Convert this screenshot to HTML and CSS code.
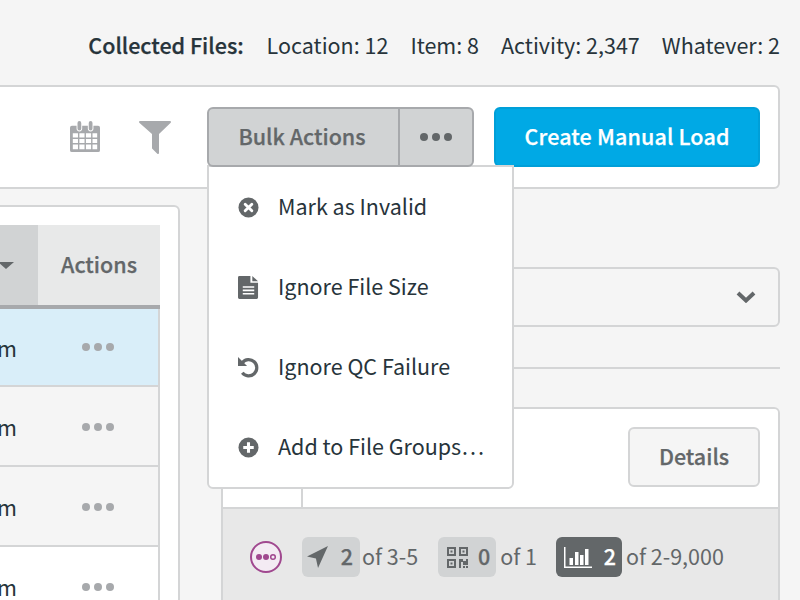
FILE: index.html
```html
<!doctype html>
<html lang="en">
<head>
    <meta charset="utf-8">
    <title>Collected Files</title>
    <link rel="stylesheet" href="styles.css">
</head>
<body>
<div class="page">
    <div class="stats">
        <strong class="stats-title">Collected Files:</strong>
        <span>Location: 12</span>
        <span>Item: 8</span>
        <span>Activity: 2,347</span>
        <span>Whatever: 2</span>
    </div>

    <div class="toolbar">
        <svg class="tool-icon cal" width="30" height="32" viewBox="0 0 32 34">
            <path fill="#a7a9ac" d="M2 5h5v3a3 3 0 0 0 6 0V5h6v3a3 3 0 0 0 6 0V5h5a2 2 0 0 1 2 2v24a2 2 0 0 1-2 2H2a2 2 0 0 1-2-2V7a2 2 0 0 1 2-2z"/>
            <path fill="#a7a9ac" d="M8 2a2 2 0 0 1 4 0v6a2 2 0 0 1-4 0zM20 2a2 2 0 0 1 4 0v6a2 2 0 0 1-4 0z"/>
            <path fill="#fff" d="M3 13h5.500v4.500H3zM10 13h5.500v4.500H10zM17 13h5.500v4.500H17zM24 13h5v4.500h-5zM3 19h5.500v4.500H3zM10 19h5.500v4.500H10zM17 19h5.500v4.500H17zM24 19h5v4.500h-5zM3 25h5.500v5H3zM10 25h5.500v5H10zM17 25h5.500v5H17zM24 25h5v5h-5z"/>
        </svg>
        <svg class="tool-icon funnel" width="32" height="33" viewBox="0 0 32 33">
            <path fill="#a7a9ac" d="M1 0h30a1 1 0 0 1 .7 1.700L20 13v19a1 1 0 0 1-1.700.7l-5-5a1 1 0 0 1-.3-.7V13L.3 1.700A1 1 0 0 1 1 0z"/>
        </svg>

        <div class="bulk">
            <button class="bulk-main"><span class="btn-label">Bulk Actions</span></button>
            <button class="bulk-more"><i class="dot"></i><i class="dot"></i><i class="dot"></i></button>

            <ul class="menu">
                <li>
                    <svg width="21" height="21" viewBox="0 0 22 22"><circle cx="11" cy="11" r="10.500" fill="#636769"/><path d="M7.500 7.500l7 7M14.500 7.500l-7 7" stroke="#fff" stroke-width="3" stroke-linecap="round"/></svg>
                    <span class="menu-label">Mark as Invalid</span>
                </li>
                <li>
                    <svg width="21" height="23" viewBox="0 0 22 24"><path fill="#636769" d="M1.500 0H13v7h8v15.500a1.500 1.500 0 0 1-1.500 1.500h-18A1.500 1.500 0 0 1 0 22.500v-21A1.500 1.500 0 0 1 1.500 0zM15 0l6 5.500h-6z"/><path stroke="#fff" stroke-width="1.600" d="M5 11.500h12M5 15h12M5 18.500h12"/></svg>
                    <span class="menu-label">Ignore File Size</span>
                </li>
                <li>
                    <svg width="21" height="21" viewBox="0 0 22 22"><path fill="none" stroke="#636769" stroke-width="3.400" d="M4.500 6A8.500 8.500 0 1 1 4.500 16.500"/><path fill="#636769" d="M0 0l9.500 9.500H0z"/></svg>
                    <span class="menu-label">Ignore QC Failure</span>
                </li>
                <li>
                    <svg width="21" height="21" viewBox="0 0 22 22"><circle cx="11" cy="11" r="10.500" fill="#636769"/><path d="M11 5.500v11M5.500 11h11" stroke="#fff" stroke-width="3.200"/></svg>
                    <span class="menu-label">Add to File Groups…</span>
                </li>
            </ul>
        </div>

        <button class="create"><span class="btn-label">Create Manual Load</span></button>
    </div>

    <div class="main">
        <div class="left-card">
            <div class="thead">
                <div class="th-sort"><i class="caret"></i></div>
                <div class="th-actions">Actions</div>
            </div>
            <div class="row selected"><span class="cut">m</span><span class="row-dots"><i class="dot"></i><i class="dot"></i><i class="dot"></i></span></div>
            <div class="row odd"><span class="cut">m</span><span class="row-dots"><i class="dot"></i><i class="dot"></i><i class="dot"></i></span></div>
            <div class="row odd"><span class="cut">m</span><span class="row-dots"><i class="dot"></i><i class="dot"></i><i class="dot"></i></span></div>
            <div class="row"><span class="cut">m</span><span class="row-dots"><i class="dot"></i><i class="dot"></i><i class="dot"></i></span></div>
        </div>

        <div class="right">
            <div class="collapse">
                <svg width="20" height="12" viewBox="0 0 20 12"><path fill="none" stroke="#636769" stroke-width="4" d="M2 2l8 7.500L18 2"/></svg>
            </div>
            <div class="divider"></div>
            <div class="card">
                <div class="card-top">
                    <div class="card-cell"></div>
                    <button class="details"><span class="btn-label">Details</span></button>
                </div>
                <div class="card-foot">
                    <svg class="status" width="32" height="32" viewBox="0 0 32 32">
                        <circle cx="16" cy="16" r="15" fill="#f3ebf3" stroke="#a0488f" stroke-width="2"/>
                        <circle cx="9" cy="16" r="3" fill="#a0488f"/>
                        <circle cx="16" cy="16" r="3" fill="#a0488f"/>
                        <circle cx="23" cy="16" r="2.300" fill="none" stroke="#a0488f" stroke-width="1.500"/>
                    </svg>
                    <div class="pill">
                        <svg width="21" height="22" viewBox="0 0 20 21"><path fill="#636769" d="M20 0L10.500 21 8.500 12 0 10z"/></svg>
                        <b>2</b>
                    </div>
                    <span class="of of-first">of 3-5</span>
                    <div class="pill qr">
                        <svg width="21" height="21" viewBox="0 0 21 21"><path fill="#636769" fill-rule="evenodd" d="M0 0h9v9H0zM2 2v5h5V2zM12 0h9v9h-9zM14 2v5h5V2zM0 12h9v9H0zM2 14v5h5v-5zM3.500 3.500h2v2h-2zM15.500 3.500h2v2h-2zM3.500 15.500h2v2h-2zM12 12h4v2h3v-2h2v6h-5v-3h-2v6h-2zM16 19h2v2h-2zM19 19h2v2h-2z"/></svg>
                        <b>0</b>
                    </div>
                    <span class="of of-second">of 1</span>
                    <div class="pill dark">
                        <svg width="28" height="21" viewBox="0 0 28 21"><path fill="#fff" d="M0 0h1.500v19.500H28V21H0zM5.500 11h3.500v7H5.500zM11 5h3.500v13H11zM16 8h3.500v10H16zM21 2h3.500v16H21z"/></svg>
                        <b>2</b>
                    </div>
                    <span class="of">of 2-9,000</span>
                </div>
            </div>
        </div>
    </div>
</div>
</body>
</html>
```

FILE: styles.css
```css
*{
    margin:0;
    padding:0;
    box-sizing:border-box;
}
html,body{
    height:100%;
    overflow:hidden;
}
body{
    background:#f5f5f5;
    color:#27343b;
    font-family:"Noto Sans CJK SC","Liberation Sans",sans-serif;
    font-size:21.5px;
}
ul,li{
    list-style:none;
}
button{
    font-family:inherit;
}
.page{
    width:800px;
    height:600px;
    padding-right:20px;
    overflow:hidden;
}
/* medium + thin stroke, the installed font has no semibold */
b,.stats-title,.btn-label,.th-actions{
    font-weight:500;
    -webkit-text-stroke:.25px currentColor;
}
b{
    line-height:30px;
    margin-bottom:2px;
}

/* top stats */
.stats{
    height:85px;
    padding-top:30px;
    display:flex;
    justify-content:flex-end;
    line-height:30px;
    gap:22px;
}
.stats-title{
    margin-right:1px;
}

/* toolbar */
.toolbar{
    height:104px;
    margin-left:-10px;
    padding-right:18px;
    display:flex;
    align-items:center;
    justify-content:flex-end;
    background:#fff;
    border:2px solid #d4d5d6;
    border-radius:6px;
}
.tool-icon{
    flex:none;
}
.cal{
    margin-right:39px;
}
.funnel{
    margin-right:36px;
}
.bulk{
    position:relative;
    display:flex;
    height:60px;
    margin-right:20px;
}
.bulk button{
    position:relative;
    z-index:6;
    background:#d1d3d4;
    border:2px solid #a7a9ac;
    color:#636769;
    font-size:21.5px;
}
.btn-label{
    display:block;
    line-height:30px;
    margin-top:-2px;
}
.bulk-main{
    width:193px;
    border-radius:6px 0 0 6px;
}
.bulk-main .btn-label{
    margin-right:3px;
}
.bulk-more{
    width:76px;
    margin-left:-2px;
    border-radius:0 6px 6px 0;
    display:flex;
    align-items:center;
    justify-content:center;
    gap:4px;
}
.bulk-more .dot{
    background:#636769;
}
.dot{
    display:block;
    width:8px;
    height:8px;
    border-radius:50%;
    background:#a7a9ac;
}
.create{
    width:266px;
    height:60px;
    background:#00a9e5;
    border:2px solid #009fd8;
    border-radius:6px;
    color:#fff;
    font-size:21.5px;
    letter-spacing:.15px;
}

/* dropdown */
.menu{
    position:absolute;
    z-index:5;
    top:58px;
    left:0;
    width:307px;
    height:324px;
    background:#fff;
    border:2px solid #d4d5d6;
    border-radius:0 0 6px 6px;
}
.menu li{
    display:flex;
    align-items:center;
    height:80px;
    padding-left:29px;
    gap:19px;
    color:#27343b;
}
.menu-label{
    line-height:30px;
    margin-bottom:2px;
}

/* main area */
.main{
    display:flex;
    gap:41px;
}
.left-card{
    flex:none;
    width:190px;
    height:400px;
    margin-top:16px;
    margin-left:-10px;
    padding:18px 18px 0 0;
    background:#fff;
    border:2px solid #d4d5d6;
    border-radius:6px;
}
.thead{
    display:flex;
    height:84px;
    border-bottom:4px solid #a7a9ac;
}
.th-sort{
    flex:1;
    background:#d1d3d4;
    position:relative;
}
.caret{
    position:absolute;
    top:37px;
    right:24px;
    border-style:solid;
    border-width:7px 8px 0;
    border-color:#636769 transparent transparent;
}
.th-actions{
    flex:none;
    width:122px;
    background:#e8e9e9;
    color:#636769;
    line-height:78px;
    text-align:center;
}
.row{
    display:flex;
    align-items:center;
    height:80px;
    background:#fff;
    border-right:2px solid #d4d5d6;
    border-bottom:2px solid #d4d5d6;
}
.row.selected{
    height:78px;
    background:#d9eef9;
}
.row.odd{
    background:#f5f5f5;
}
.cut{
    width:25px;
    margin-right:65px;
    margin-top:2px;
    text-align:right;
    line-height:30px;
}
.row-dots{
    display:flex;
    gap:4px;
    margin-top:2px;
}
.selected .row-dots{
    margin-top:0;
}

/* right column */
.right{
    flex:1;
    min-width:0;
}
.collapse{
    display:flex;
    justify-content:flex-end;
    align-items:center;
    height:60px;
    margin-top:78px;
    padding-right:22px;
    border:2px solid #d4d5d6;
    border-radius:6px;
}
.divider{
    height:2px;
    margin-top:40px;
    background:#d4d5d6;
}
.card{
    height:300px;
    margin-top:38px;
    background:#e8e8e8;
    border:2px solid #d4d5d6;
    border-radius:6px;
    overflow:hidden;
}
.card-top{
    display:flex;
    justify-content:flex-end;
    align-items:flex-start;
    height:100px;
    padding:18px 18px 0 0;
    background:#fff;
    border-bottom:2px solid #d4d5d6;
    position:relative;
}
.card-cell{
    position:absolute;
    left:78px;
    top:70px;
    width:2px;
    height:30px;
    background:#d4d5d6;
}
.details{
    width:132px;
    height:60px;
    background:#f5f5f5;
    border:2px solid #d4d5d6;
    border-radius:6px;
    color:#636769;
    font-size:21.5px;
}
.card-foot{
    display:flex;
    align-items:center;
    height:96px;
    padding-left:27px;
    color:#636769;
}
.status{
    margin-right:20px;
    flex:none;
}
.pill{
    display:flex;
    align-items:center;
    justify-content:space-between;
    flex:none;
    width:58px;
    height:40px;
    padding:0 7px 0 5px;
    background:#d1d3d4;
    border-radius:6px;
    margin-right:2px;
}
.pill.qr{
    padding-left:9px;
    padding-right:6px;
}
.pill.dark{
    width:66px;
    margin-right:4px;
    padding:0 6px 0 8px;
    background:#636769;
    color:#fff;
}
.of{
    line-height:30px;
    margin-bottom:2px;
    margin-right:20px;
}
.of-second{
    margin-left:2px;
    margin-right:19px;
}
```
